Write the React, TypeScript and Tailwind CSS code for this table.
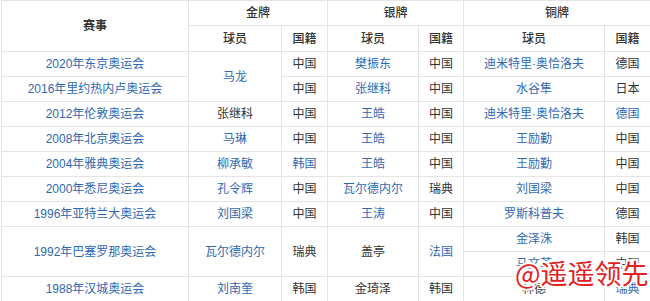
import React from "react";

const B = "text-[#2f68b0]";
const K = "text-[#333333]";

type Cell = { t: string; link?: boolean; rs?: number };

const td = "border border-[#e4e4e4] text-center align-middle p-0 leading-none";

function C({ c }: { c: Cell }) {
  return (
    <td rowSpan={c.rs} className={`${td} ${c.link ? B : K}`}>
      {c.t}
    </td>
  );
}

export default function App() {
  const L = (t: string, rs?: number): Cell => ({ t, link: true, rs });
  const T = (t: string, rs?: number): Cell => ({ t, rs });

  const rows: Cell[][] = [
    [L("2020年东京奥运会"), L("马龙", 2), T("中国"), L("樊振东"), T("中国"), L("迪米特里·奥恰洛夫"), T("德国")],
    [L("2016年里约热内卢奥运会"), T("中国"), L("张继科"), T("中国"), L("水谷隼"), T("日本")],
    [L("2012年伦敦奥运会"), T("张继科"), T("中国"), L("王皓"), T("中国"), L("迪米特里·奥恰洛夫"), L("德国")],
    [L("2008年北京奥运会"), L("马琳"), T("中国"), L("王皓"), T("中国"), L("王励勤"), T("中国")],
    [L("2004年雅典奥运会"), L("柳承敏"), L("韩国"), L("王皓"), T("中国"), L("王励勤"), T("中国")],
    [L("2000年悉尼奥运会"), L("孔令辉"), T("中国"), L("瓦尔德内尔"), T("瑞典"), L("刘国梁"), T("中国")],
    [L("1996年亚特兰大奥运会"), L("刘国梁"), T("中国"), L("王涛"), T("中国"), L("罗斯科普夫"), T("德国")],
    [L("1992年巴塞罗那奥运会", 2), L("瓦尔德内尔", 2), T("瑞典", 2), T("盖亭", 2), L("法国", 2), L("金泽洙"), T("韩国")],
    [L("马文革"), T("中国")],
    [L("1988年汉城奥运会"), L("刘南奎"), T("韩国"), T("金琦泽"), T("韩国"), T("林德"), L("瑞典")],
  ];

  return (
    <div
      className="relative w-[650px] h-[301px] overflow-hidden bg-white text-[12px]"
      style={{ fontFamily: '"Liberation Sans", "Noto Sans CJK SC", sans-serif' }}
    >
      <table className="ml-[1px] w-[649px] table-fixed border-collapse">
        <colgroup>
          <col className="w-[187px]" />
          <col className="w-[93px]" />
          <col className="w-[46px]" />
          <col className="w-[91px]" />
          <col className="w-[45px]" />
          <col className="w-[141px]" />
          <col className="w-[46px]" />
        </colgroup>
        <thead>
          <tr className="h-[25px]">
            <th rowSpan={2} className={`${td} ${K} font-bold`}>赛事</th>
            <th colSpan={2} className={`${td} ${K} font-medium`}>金牌</th>
            <th colSpan={2} className={`${td} ${K} font-medium`}>银牌</th>
            <th colSpan={2} className={`${td} ${K} font-medium`}>铜牌</th>
          </tr>
          <tr className="h-[26px]">
            {["球员", "国籍", "球员", "国籍", "球员", "国籍"].map((h, i) => (
              <th key={i} className={`${td} ${K} font-medium`}>{h}</th>
            ))}
          </tr>
        </thead>
        <tbody>
          {rows.map((r, i) => (
            <tr key={i} className="h-[25px]">
              {r.map((c, j) => (
                <C key={j} c={c} />
              ))}
            </tr>
          ))}
        </tbody>
      </table>
      <div
        className="absolute left-[515px] top-[259px] text-[27px] leading-none text-[#e3211f]"
        style={{
          fontFamily: '"Noto Sans CJK SC", sans-serif',
          WebkitTextStroke: "4px #ffffff",
          paintOrder: "stroke fill",
        }}
      >
        @遥遥领先
      </div>
    </div>
  );
}
